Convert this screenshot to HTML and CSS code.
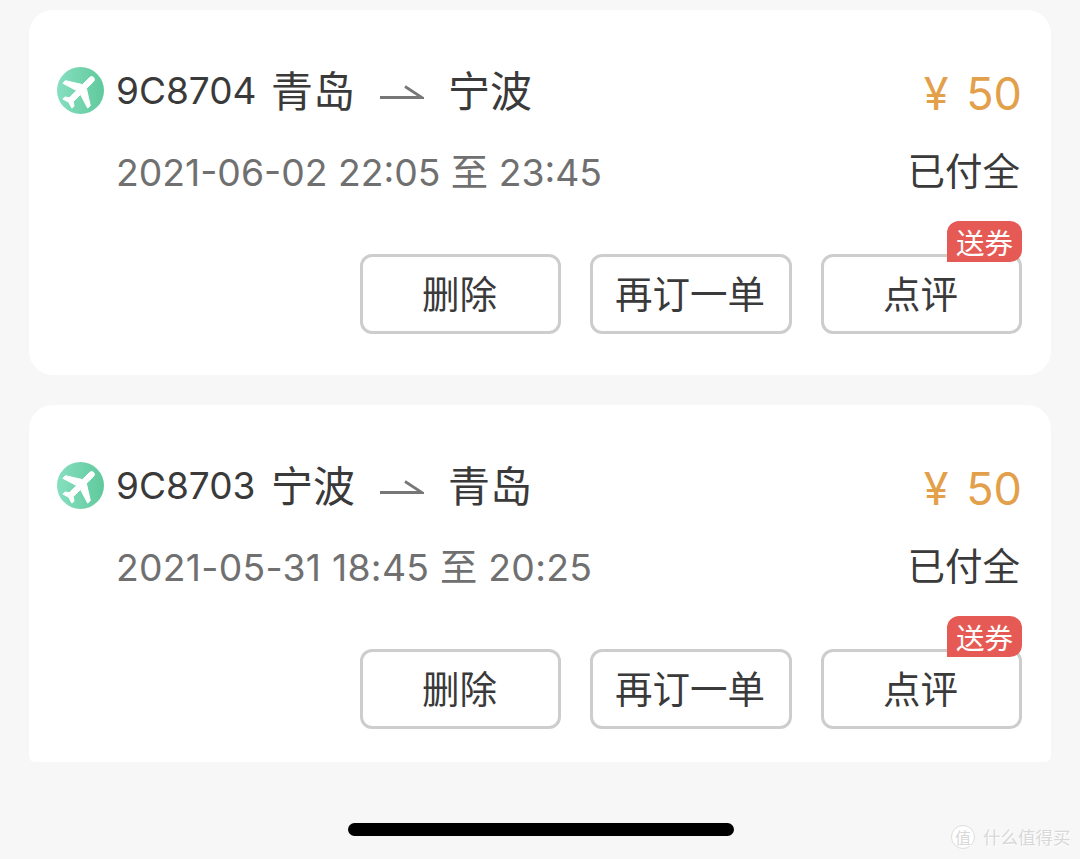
FILE: index.html
```html
<!DOCTYPE html>
<html lang="zh">
<head>
<meta charset="utf-8">
<title>订单</title>
<link rel="stylesheet" href="styles.css">
</head>
<body>
<main class="page">
  <section class="card">
    <div class="row-top">
      <svg class="plane" viewBox="0 0 47 47"><defs><linearGradient id="g1" x1="0" y1="0" x2="1" y2="0"><stop offset="0" stop-color="#86dfc0"/><stop offset="1" stop-color="#60c99c"/></linearGradient></defs><circle cx="23.5" cy="23.5" r="23.5" fill="url(#g1)"/><g transform="translate(23.5 23.5) rotate(45) scale(1.85) translate(-11.5 -12)"><path fill="#fff" stroke="#fff" stroke-width=".5" d="M21 16v-2l-8-5V3.5c0-.83-.67-1.5-1.5-1.5S10 2.67 10 3.5V9l-8 5v2l8-2.5V19l-2 1.5V22l3.5-1 3.5 1v-1.5L13 19v-5.5l8 2.500z"/></g></svg>
      <div class="route">
        <span class="flight">9C8704</span>
        <span class="city">青岛</span>
        <svg class="arrow" viewBox="0 0 44 16"><path d="M0 13.5H42L25 2.500" fill="none" stroke="#777" stroke-width="2.800"/></svg>
        <span class="city">宁波</span>
      </div>
      <span class="price">¥ 50</span>
    </div>
    <div class="row-mid">
      <span class="time">2021-06-02 22:05 至 23:45</span>
      <span class="status">已付全</span>
    </div>
    <div class="actions">
      <button class="btn">删除</button>
      <button class="btn">再订一单</button>
      <button class="btn">点评<span class="badge">送券</span></button>
    </div>
  </section>
  <section class="card card-last">
    <div class="row-top">
      <svg class="plane" viewBox="0 0 47 47"><circle cx="23.5" cy="23.5" r="23.5" fill="url(#g1)"/><g transform="translate(23.5 23.5) rotate(45) scale(1.85) translate(-11.5 -12)"><path fill="#fff" stroke="#fff" stroke-width=".5" d="M21 16v-2l-8-5V3.5c0-.83-.67-1.5-1.5-1.5S10 2.67 10 3.5V9l-8 5v2l8-2.5V19l-2 1.5V22l3.5-1 3.5 1v-1.5L13 19v-5.5l8 2.500z"/></g></svg>
      <div class="route">
        <span class="flight">9C8703</span>
        <span class="city">宁波</span>
        <svg class="arrow" viewBox="0 0 44 16"><path d="M0 13.5H42L25 2.500" fill="none" stroke="#777" stroke-width="2.800"/></svg>
        <span class="city">青岛</span>
      </div>
      <span class="price">¥ 50</span>
    </div>
    <div class="row-mid">
      <span class="time time-loose">2021-05-31 18:45 至 20:25</span>
      <span class="status">已付全</span>
    </div>
    <div class="actions">
      <button class="btn">删除</button>
      <button class="btn">再订一单</button>
      <button class="btn">点评<span class="badge">送券</span></button>
    </div>
  </section>
</main>
<div class="home-bar"></div>
<div class="watermark"><span class="wm-logo">值</span><span class="wm-text">什么值得买</span></div>
</body>
</html>
```
FILE: styles.css
```css
* { box-sizing: border-box; }
html, body { margin: 0; height: 859px; overflow: hidden; }
body {
  background: #f7f7f7;
  font-family: "Inter", "Noto Sans CJK SC", sans-serif;
  color: #3a3a3a;
  position: relative;
}
.page {
  display: flex;
  flex-direction: column;
  gap: 30px;
  padding: 10px 29px 0;
}
.card {
  background: #fff;
  border-radius: 24px;
  height: 365px;
  padding: 52px 29px 0 28px;
}
.card-last {
  height: 357px;
  border-radius: 24px 24px 6px 6px;
}
.row-top {
  display: flex;
  align-items: center;
  height: 60px;
}
.plane {
  width: 47px;
  height: 47px;
  flex: none;
  margin: -4px 12px 0 0;
}
.route {
  display: flex;
  align-items: center;
  flex: 1;
  line-height: 60px;
  margin-top: -4px;
}
.flight {
  width: 155px;
  font-size: 37px;
  margin-top: 2px;
}
.city {
  font-family: "Noto Sans CJK SC", sans-serif;
  font-weight: 400;
  font-size: 42px;
  margin-top: -3px;
}
.arrow {
  width: 44px;
  height: 16px;
  margin: 3px 24px 0 25px;
}
.price {
  font-size: 45px;
  word-spacing: 5px;
  color: #e3a04b;
  margin-top: 4px;
  line-height: 60px;
}
.row-mid {
  display: flex;
  justify-content: space-between;
  align-items: center;
  height: 50px;
  margin-top: 23px;
  padding-left: 59px;
}
.time {
  font-size: 37.3px;
  color: #707070;
}
.time-loose {
  letter-spacing: 0.28px;
}
.status {
  font-size: 37.5px;
  line-height: 48px;
  color: #3a3a3a;
  margin: 4px 2px 0 0;
}
.actions {
  display: flex;
  justify-content: flex-end;
  gap: 29px;
  margin-top: 59px;
}
.btn {
  position: relative;
  width: 201px;
  height: 80px;
  padding: 0 2px 6px 0;
  border: 3px solid #cdcdcd;
  border-radius: 12px;
  background: #fff;
  color: #3a3a3a;
  font-family: "Noto Sans CJK SC", sans-serif;
  font-size: 37.5px;
}
.btn:nth-child(2) {
  width: 202px;
}
.badge {
  position: absolute;
  right: -3px;
  top: -36px;
  width: 75px;
  height: 41px;
  border-radius: 12px 12px 12px 0;
  background: #e65a55;
  color: #fff;
  font-size: 28.5px;
  line-height: 41px;
  text-align: center;
}
.home-bar {
  position: absolute;
  left: 348px;
  top: 823px;
  width: 386px;
  height: 13px;
  border-radius: 7px;
  background: #000;
}
.watermark {
  position: absolute;
  left: 951px;
  top: 825px;
  display: flex;
  align-items: center;
  gap: 8px;
  color: #d8d8d8;
  text-shadow: 1px 1px 0 #fff;
  font-family: "Noto Sans CJK SC", sans-serif;
}
.wm-logo {
  width: 24px;
  height: 24px;
  border-radius: 50%;
  border: 1px solid #ddd;
  background: #fff;
  font-size: 16px;
  line-height: 22px;
  text-align: center;
}
.wm-text {
  font-size: 17.5px;
  line-height: 24px;
}
```
